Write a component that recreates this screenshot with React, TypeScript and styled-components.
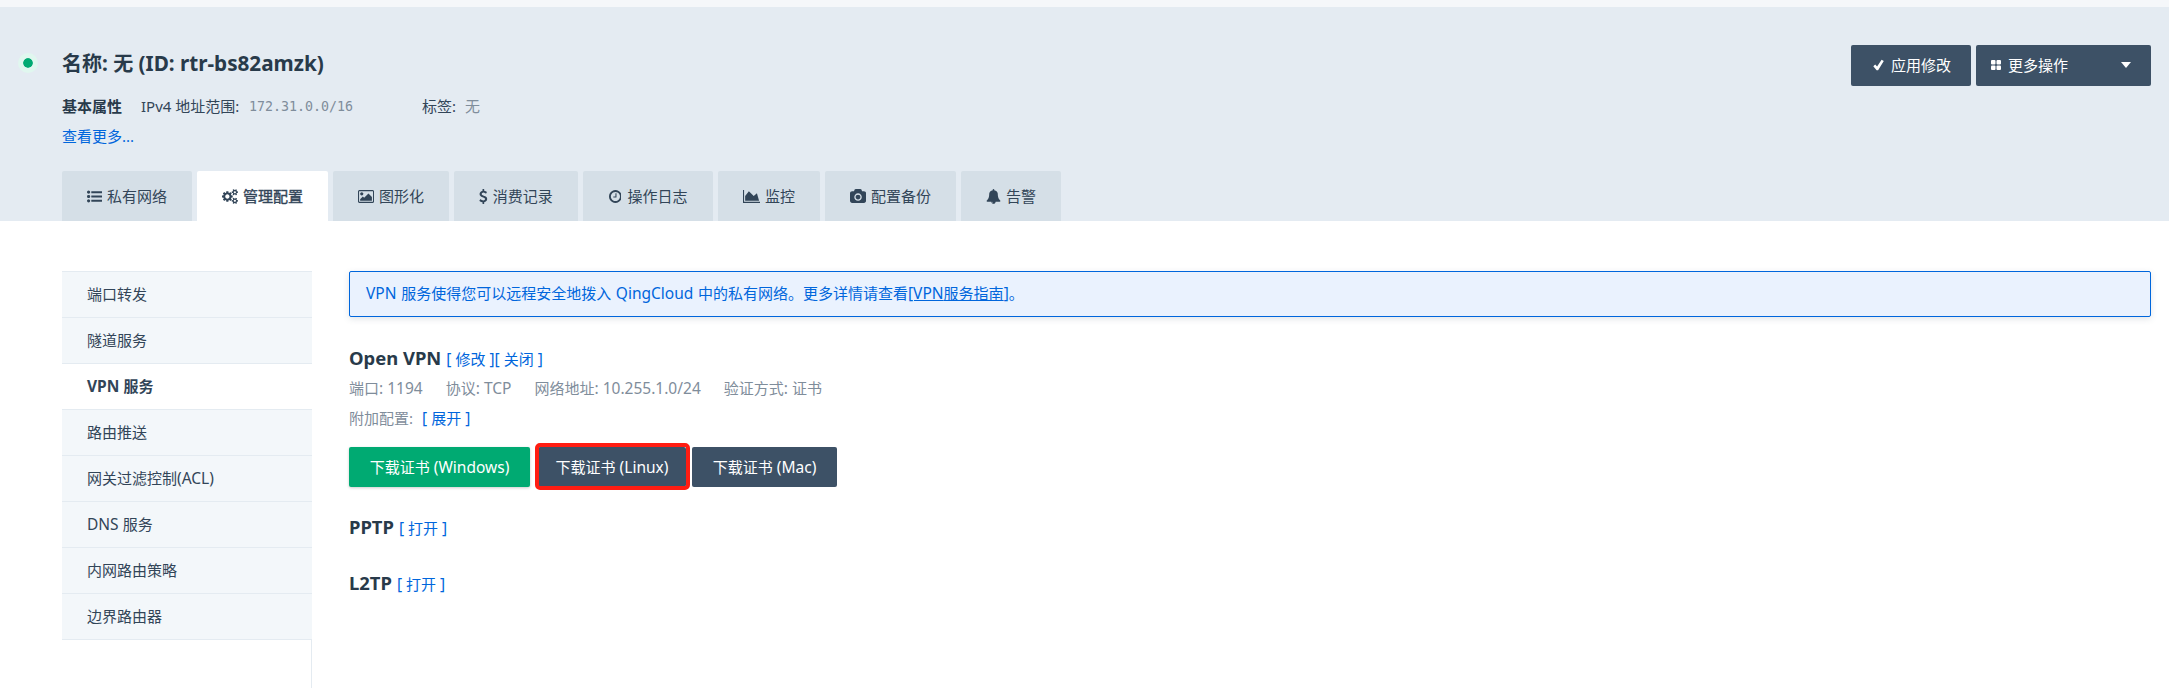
import React from 'react';
import styled, { createGlobalStyle, css } from 'styled-components';

const Global = createGlobalStyle`
  * { box-sizing: border-box; }
  body {
    margin: 0;
    background: #fff;
    color: #324558;
    font-family: 'Noto Sans', 'Noto Sans CJK SC', sans-serif;
    font-size: 15px;
    line-height: 20px;
    overflow: hidden;
  }
`;

const Page = styled.div`
  display: flex;
  flex-direction: column;
  height: 688px;
  white-space: nowrap;
`;

const Header = styled.header`
  display: flex;
  height: 221px;
  flex: none;
  border-top: 7px solid #f5f7fa;
  background: #e4ebf2;
  padding: 38px 18px 0 18px;
`;

const Status = styled.span`
  width: 20px;
  height: 20px;
  margin: 8px 24px 0 0;
  border-radius: 50%;
  border: 5px solid #e0f7ef;
  background: #00aa72;
  background-clip: padding-box;
  flex: none;
`;

const Summary = styled.div`
  display: flex;
  flex-direction: column;
  flex: 1;
`;

const Title = styled.h1`
  margin: 3px 0 0;
  font-size: 20px;
  line-height: 30px;
  color: #283a4a;
  font-weight: 700;
`;

const Meta = styled.div`
  display: flex;
  align-items: center;
  height: 30px;
  margin-top: 12px;
`;

const Strong = styled.b`
  width: 79px;
  color: #283a4a;
`;

const Label = styled.span<{ $w: number }>`
  width: ${(p) => p.$w}px;
`;

const Muted = styled.span<{ $w?: number }>`
  color: #7f8d9b;
  width: ${(p) => (p.$w ? `${p.$w}px` : 'auto')};
`;

const Mono = styled(Muted)`
  font-family: 'DejaVu Sans Mono', monospace;
  font-size: 13.3px;
  padding-top: 1px;
`;

const Link = styled.a`
  color: #0066dc;
  cursor: pointer;
`;

const More = styled(Link)`
  line-height: 30px;
`;

const Latin = styled.span`
  font-size: 1.035em;
`;

const Tabs = styled.nav`
  display: flex;
  gap: 5px;
  margin-top: auto;
`;

const Tab = styled.div<{ $w: number; $active?: boolean; $gap?: number }>`
  display: flex;
  align-items: center;
  justify-content: center;
  gap: ${(p) => p.$gap ?? 5}px;
  width: ${(p) => p.$w}px;
  height: 50px;
  border-radius: 2px 2px 0 0;
  background: ${(p) => (p.$active ? '#fff' : '#d5dfe7')};
  ${(p) => p.$active && css`
    -webkit-text-stroke: 0.4px currentColor;
  `}
`;

const Glyph = styled.svg`
  display: block;
  flex: none;
  fill: currentColor;
`;

const Actions = styled.div`
  display: flex;
  gap: 5px;
`;

const buttonBase = css`
  display: flex;
  align-items: center;
  border-radius: 2px;
  color: #fff;
  background: #3d5166;
`;

const HeaderButton = styled.div<{ $w: number; $pad: number }>`
  ${buttonBase}
  gap: 7px;
  width: ${(p) => p.$w}px;
  height: 41px;
  padding: 0 20px 1px ${(p) => p.$pad}px;
`;

const Caret = styled.span`
  margin-left: auto;
  border: 5px solid transparent;
  border-top: 6px solid #fff;
  border-bottom: 0;
`;

const Body = styled.div`
  display: flex;
  flex: 1;
  padding: 50px 18px 0 62px;
`;

const Sidebar = styled.aside`
  display: flex;
  flex-direction: column;
  width: 250px;
  margin-right: 37px;
`;

const SideItem = styled.div<{ $active?: boolean }>`
  height: 46px;
  padding: 12px 25px 0;
  border-top: 1px solid #e4ebf1;
  background: ${(p) => (p.$active ? '#fff' : '#f3f7fa')};
  font-weight: ${(p) => (p.$active ? 700 : 400)};
`;

const SideRest = styled.div`
  flex: 1;
  border: 1px solid #e4ebf1;
  border-left: 0;
  border-bottom: 0;
`;

const Content = styled.main`
  flex: 1;
`;

const Notice = styled.div`
  height: 46px;
  padding: 11px 15px 0 16px;
  word-spacing: 0.6px;
  border: 1px solid #0066dc;
  border-radius: 2px;
  background: #eaf2fe;
  box-shadow: 0 2px 6px rgba(60, 80, 100, 0.15);
  color: #0066dc;

  a { text-decoration: underline; }
`;

const Section = styled.section<{ $top: number }>`
  margin-top: ${(p) => p.$top}px;
`;

const Heading = styled.div`
  display: flex;
  align-items: baseline;
  height: 30px;
  line-height: 30px;
`;

const Name = styled.h2`
  margin: 0 5px 0 0;
  font-size: 17.8px;
  font-weight: 700;
  color: #283a4a;
`;

const Facts = styled.div<{ $gap: number }>`
  display: flex;
  gap: ${(p) => p.$gap}px;
  height: 30px;
  line-height: 30px;
  color: #7f8d9b;
`;

const Downloads = styled.div`
  display: flex;
  margin-top: 14px;
`;

const Download = styled.div<{ $w: number; $primary?: boolean; $marked?: boolean }>`
  ${buttonBase}
  justify-content: center;
  position: relative;
  width: ${(p) => p.$w}px;
  height: 40px;
  padding-bottom: 1px;
  margin-right: ${(p) => (p.$primary ? 8 : 6)}px;
  ${(p) => p.$primary && css`
    background: #00aa72;
    box-shadow: 0 1px 3px rgba(0, 0, 0, 0.2);
  `}
  ${(p) => p.$marked && css`
    &::after {
      content: '';
      position: absolute;
      inset: -4px -4px -3px -3px;
      border: 4px solid #ff1d12;
      border-radius: 5px;
    }
  `}
`;

const DOT = 'q0 80-56 136t-136 56-136-56-56-136 56-136 136-56 136 56 56 136z';
const BAR = 'v192q0 13-9.5 22.5t-22.5 9.5h-1216q-13 0-22.5-9.5t-9.5-22.5v-192q0-13 9.5-22.5t22.5-9.5h1216q13 0 22.5 9.5t9.5 22.5z';
const SMALL_GEAR = 'v140q0 16-149 31-12 27-30 52 51 113 51 138 0 4-4 7-122 71-124 71-8 0-46-47t-52-68q-20 2-30 2t-30-2q-14 21-52 68t-46 47q-2 0-124-71-4-3-4-7 0-25 51-138-18-25-30-52-149-15-149-31v-140q0-16 149-31 13-29 30-52-51-113-51-138 0-4 4-7 4-2 35-20t59-34 30-16q8 0 46 46.5t52 67.5q20-2 30-2t30 2q51-71 92-112l6-2q4 0 124 70 4 3 4 7 0 25-51 138 17 23 30 52 149 15 149 31z';

const ICONS = {
  list: { w: 1792, d: `M384 1408${DOT}M384 896${DOT}M384 384${DOT}M1792 1312${BAR}M1792 800${BAR}M1792 288${BAR}` },
  cogs: { w: 1920, d: `M896 896q0-106-75-181t-181-75-181 75-75 181 75 181 181 75 181-75 75-181zm768 512q0-52-38-90t-90-38-90 38-38 90q0 53 37.5 90.5t90.5 37.5 90.5-37.5 37.5-90.5zm0-1024q0-52-38-90t-90-38-90 38-38 90q0 53 37.5 90.5t90.5 37.5 90.5-37.5 37.5-90.5zm-384 421v185q0 10-7 19.5t-16 10.5l-155 24q-11 35-32 76 34 48 90 115 7 11 7 20 0 12-7 19-23 30-82.5 89.5t-78.5 59.5q-11 0-21-7l-115-90q-37 19-77 31-11 108-23 155-7 24-30 24h-186q-11 0-20-7.5t-10-17.5l-23-153q-34-10-75-31l-118 89q-7 7-20 7-11 0-21-8-144-133-144-160 0-9 7-19 10-14 41-53t47-61q-23-44-35-82l-152-24q-10-1-17-9.5t-7-19.5v-185q0-10 7-19.5t16-10.5l155-24q11-35 32-76-34-48-90-115-7-11-7-20 0-12 7-20 22-30 82-89t79-59q11 0 21 7l115 90q34-18 77-32 11-108 23-154 7-24 30-24h186q11 0 20 7.5t10 17.5l23 153q34 10 75 31l118-89q8-7 20-7 11 0 21 8 144 133 144 160 0 8-7 19-12 16-42 54t-45 60q23 48 34 82l152 23q10 2 17 10.5t7 19.5zM1920 1338${SMALL_GEAR}M1920 314${SMALL_GEAR}` },
  image: { w: 1920, d: 'M640 576q0 80-56 136t-136 56-136-56-56-136 56-136 136-56 136 56 56 136zm1024 384v448h-1408v-192l320-320 160 160 512-512zm96-704h-1600q-13 0-22.5 9.5t-9.5 22.5v1216q0 13 9.5 22.5t22.5 9.5h1600q13 0 22.5-9.5t9.5-22.5v-1216q0-13-9.5-22.5t-22.5-9.5zm160 32v1216q0 66-47 113t-113 47h-1600q-66 0-113-47t-47-113v-1216q0-66 47-113t113-47h1600q66 0 113 47t47 113z' },
  dollar: { w: 1024, d: 'M978 1185q0 153-99.5 263.5t-258.500 136.500v175q0 14-9 23t-23 9h-135q-13 0-22.500-9.500t-9.500-22.500v-175q-66-9-127.500-31t-101.500-44.500-74-48-46.500-37.500-17.500-18q-17-21-2-41l103-135q7-10 23-12 15-2 24 9l2 2q113 99 243 125 37 8 74 8 81 0 142.500-43t61.500-122q0-28-15-53t-33.500-42-58.500-37.500-66-32-80-32.500q-39-16-61.500-25t-61.500-26.500-62.500-31-56.500-35.500-53.500-42.500-43.500-49-35.500-58-21-66.500-8.500-78q0-138 98-242t255-134v-180q0-13 9.500-22.500t22.500-9.500h135q14 0 23 9t9 23v176q57 6 110.500 23t87 33.500 63.500 37.500 39 29 15 14q17 18 5 38l-81 146q-8 15-23 16-14 3-27-7-3-3-14.500-12t-39-26.500-58.500-32-74.500-26-85.500-11.500q-95 0-155 43t-60 111q0 26 8.500 48t29.500 41.500 39.500 33 56 31 60.500 27 70 27.500q53 20 81 31.500t76 35 75.500 42.500 62 50 53 63.500 31.500 76.500 13 94z' },
  clock: { w: 1536, d: 'M896 544v448q0 14-9 23t-23 9h-320q-14 0-23-9t-9-23v-64q0-14 9-23t23-9h224v-352q0-14 9-23t23-9h64q14 0 23 9t9 23zm416 352q0-148-73-273t-198-198-273-73-273 73-198 198-73 273 73 273 198 198 273 73 273-73 198-198 73-273zm224 0q0 209-103 385.500t-279.500 279.500-385.500 103-385.500-103-279.500-279.500-103-385.500 103-385.500 279.500-279.500 385.500-103 385.500 103 279.500 279.500 103 385.500z' },
  area: { w: 2048, d: 'M2048 1536v128h-2048v-1536h128v1408h1920zm-384-1024l256 896h-1664v-576l448-576 576 576z' },
  camera: { w: 1920, d: 'M960 672q119 0 203.500 84.500t84.500 203.500-84.500 203.500-203.500 84.500-203.500-84.500-84.500-203.500 84.500-203.500 203.500-84.500zm704-416q106 0 181 75t75 181v896q0 106-75 181t-181 75h-1408q-106 0-181-75t-75-181v-896q0-106 75-181t181-75h224l51-136q19-49 69.500-84.500t103.500-35.500h512q53 0 103.500 35.500t69.500 84.500l51 136h224zm-704 1152q185 0 316.500-131.500t131.500-316.500-131.500-316.500-316.500-131.500-316.500 131.500-131.500 316.500 131.500 316.500 316.500 131.500z' },
  bell: { w: 1792, d: 'M912 1696q0-16-16-16-59 0-101.500-42.500t-42.500-101.500q0-16-16-16t-16 16q0 73 51.500 124.500t124.500 51.500q16 0 16-16zm816-288q0 52-38 90t-90 38h-448q0 106-75 181t-181 75-181-75-75-181h-448q-52 0-90-38t-38-90q50-42 91-88t85-119.500 74.500-158.500 50-206 19.500-260q0-152 117-282.500t307-158.500q-8-19-8-39 0-40 28-68t68-28 68 28 28 68q0 20-8 39 190 28 307 158.500t117 282.500q0 139 19.500 260t50 206 74.500 158.500 85 119.500 91 88z' },
} as const;

const Icon = ({ name, size = 15 }: { name: keyof typeof ICONS; size?: number }) => {
  const { w, d } = ICONS[name];
  return (
    <Glyph width={(w / 1792) * size} height={size} viewBox={`0 0 ${w} 1792`}>
      <path d={d} />
    </Glyph>
  );
};

/** Sets the Latin runs of a mixed string slightly larger than the Chinese ones. */
const Mixed = ({ children }: { children: string }) => (
  <>
    {children.split(/([\x20-\x7e]+)/).map((run, i) => (i % 2 ? <Latin key={i}>{run}</Latin> : run))}
  </>
);

const TABS: { icon: keyof typeof ICONS; text: string; w: number; gap?: number; active?: boolean }[] = [
  { icon: 'list', text: '私有网络', w: 130 },
  { icon: 'cogs', text: '管理配置', w: 131, active: true },
  { icon: 'image', text: '图形化', w: 116 },
  { icon: 'dollar', text: '消费记录', w: 124 },
  { icon: 'clock', text: '操作日志', w: 130, gap: 6 },
  { icon: 'area', text: '监控', w: 102 },
  { icon: 'camera', text: '配置备份', w: 131 },
  { icon: 'bell', text: '告警', w: 100 },
];

const MENU = ['端口转发', '隧道服务', 'VPN 服务', '路由推送', '网关过滤控制(ACL)', 'DNS 服务', '内网路由策略', '边界路由器'];
const FACTS = ['端口: 1194', '协议: TCP', '网络地址: 10.255.1.0/24', '验证方式: 证书'];

export default function App() {
  return (
    <Page>
      <Global />
      <Header>
        <Status />
        <Summary>
          <Title><Mixed>名称: 无 (ID: rtr-bs82amzk)</Mixed></Title>
          <Meta>
            <Strong>基本属性</Strong>
            <Label $w={108}>IPv4 地址范围:</Label>
            <Mono $w={173}>172.31.0.0/16</Mono>
            <Label $w={43}>标签:</Label>
            <Muted>无</Muted>
          </Meta>
          <More>查看更多...</More>
          <Tabs>
            {TABS.map((t) => (
              <Tab key={t.text} $w={t.w} $active={t.active} $gap={t.gap}>
                <Icon name={t.icon} />
                {t.text}
              </Tab>
            ))}
          </Tabs>
        </Summary>
        <Actions>
          <HeaderButton $w={120} $pad={22}>
            <Glyph width="11" height="12" viewBox="0 0 11 12">
              <path d="M0.300 7.200 2.200 5.400 4.100 7.400 8.600 0.800 10.800 2.100 5.100 11.300 3.600 11.300Z" />
            </Glyph>
            应用修改
          </HeaderButton>
          <HeaderButton $w={175} $pad={15}>
            <Glyph width="10" height="10" viewBox="0 0 10 10">
              <rect width="4.500" height="4.500" rx="1" />
              <rect x="5.500" width="4.500" height="4.500" rx="1" />
              <rect y="5.500" width="4.500" height="4.500" rx="1" />
              <rect x="5.500" y="5.500" width="4.500" height="4.500" rx="1" />
            </Glyph>
            更多操作
            <Caret />
          </HeaderButton>
        </Actions>
      </Header>
      <Body>
        <Sidebar>
          {MENU.map((m) => (
            <SideItem key={m} $active={m === 'VPN 服务'}><Mixed>{m}</Mixed></SideItem>
          ))}
          <SideRest />
        </Sidebar>
        <Content>
          <Notice>
            <Mixed>VPN 服务使得您可以远程安全地拨入 QingCloud 中的私有网络。更多详情请查看</Mixed>
            <a><Mixed>[VPN服务指南]</Mixed></a>。
          </Notice>
          <Section $top={26}>
            <Heading>
              <Name><Mixed>Open VPN</Mixed></Name>
              <Link><Mixed>[ 修改 ]</Mixed></Link>
              <Link><Mixed>[ 关闭 ]</Mixed></Link>
            </Heading>
            <Facts $gap={23}>
              {FACTS.map((f) => (
                <span key={f}><Mixed>{f}</Mixed></span>
              ))}
            </Facts>
            <Facts $gap={9}>
              <span>附加配置:</span>
              <Link><Mixed>[ 展开 ]</Mixed></Link>
            </Facts>
            <Downloads>
              <Download $w={181} $primary><span><Mixed>下载证书 (Windows)</Mixed></span></Download>
              <Download $w={148} $marked><span><Mixed>下载证书 (Linux)</Mixed></span></Download>
              <Download $w={145}><span><Mixed>下载证书 (Mac)</Mixed></span></Download>
            </Downloads>
          </Section>
          <Section $top={25}>
            <Heading>
              <Name><Mixed>PPTP</Mixed></Name>
              <Link><Mixed>[ 打开 ]</Mixed></Link>
            </Heading>
          </Section>
          <Section $top={26}>
            <Heading>
              <Name><Mixed>L2TP</Mixed></Name>
              <Link><Mixed>[ 打开 ]</Mixed></Link>
            </Heading>
          </Section>
        </Content>
      </Body>
    </Page>
  );
}
